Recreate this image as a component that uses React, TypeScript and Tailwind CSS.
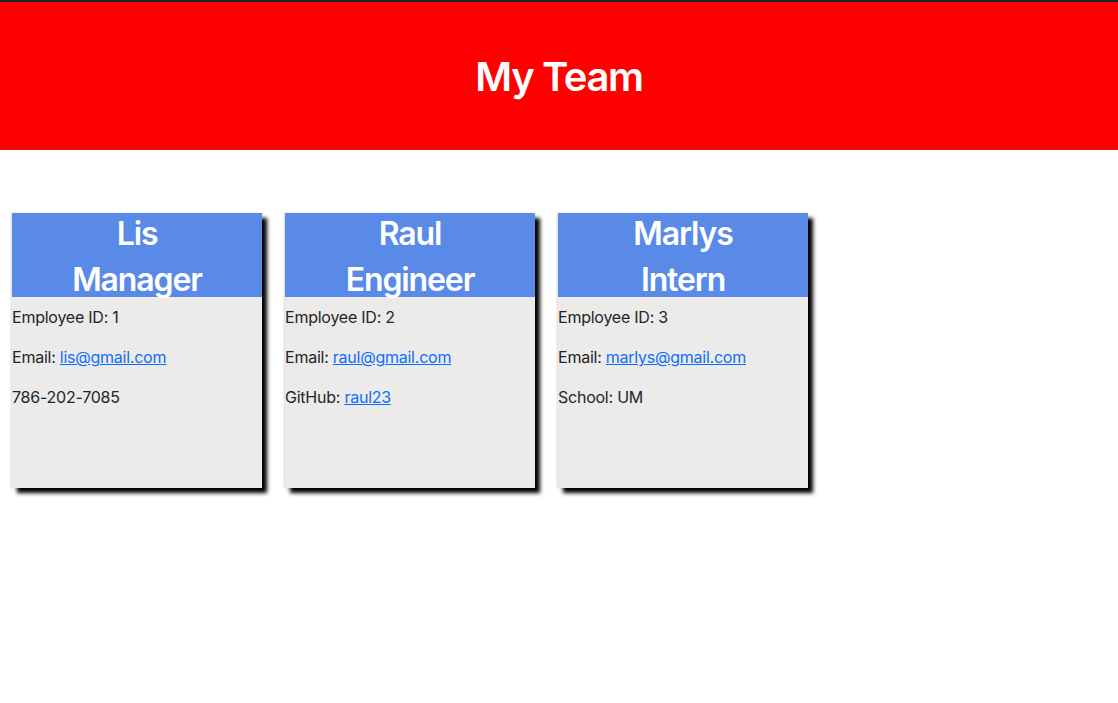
const team = [
	{ name: 'Lis', role: 'Manager', id: 1, email: 'lis@gmail.com', extra: { label: '', value: '786-202-7085' } },
	{ name: 'Raul', role: 'Engineer', id: 2, email: 'raul@gmail.com', extra: { label: 'GitHub: ', value: 'raul23', link: true } },
	{ name: 'Marlys', role: 'Intern', id: 3, email: 'marlys@gmail.com', extra: { label: 'School: ', value: 'UM' } },
];

function Card({ member }: { member: typeof team[number] }) {
	return (
		<div className="w-[250px] h-[275px] flex flex-col bg-[#ecebea] shadow-[5px_5px_4px_#000,-1px_0_2px_rgba(0,0,0,0.15)]">
			<div className="h-[84px] pt-[2px] bg-[#5a8ae8] text-white text-center font-semibold tracking-[-0.035em] text-[32px] leading-[38.4px]">
				<h2 className="mb-2">{member.name}</h2>
				<h2>{member.role}</h2>
			</div>
			<div className="pt-2 text-[16px] leading-6 tracking-[-0.015em] text-[#212529]">
				<p className="mb-4">Employee ID: {member.id}</p>
				<p className="mb-4">Email: <a href="#" className="text-[#0d6efd] underline">{member.email}</a></p>
				<p className="mb-4">
					{member.extra.label}
					{member.extra.link
						? <a href="#" className="text-[#0d6efd] underline">{member.extra.value}</a>
						: member.extra.value}
				</p>
			</div>
		</div>
	);
}

export default function App() {
	return (
		<div className="min-h-screen bg-white font-['Inter',sans-serif]">
			<header className="h-[150px] pt-[2px] border-t-2 border-[#222] bg-[#ff0000] flex items-center justify-center">
				<h1 className="text-white text-[40px] font-semibold tracking-[-0.035em] leading-[48px]">My Team</h1>
			</header>
			<main className="flex gap-[23px] pl-3 pt-[63px]">
				{team.map((m) => <Card key={m.id} member={m} />)}
			</main>
		</div>
	);
}
